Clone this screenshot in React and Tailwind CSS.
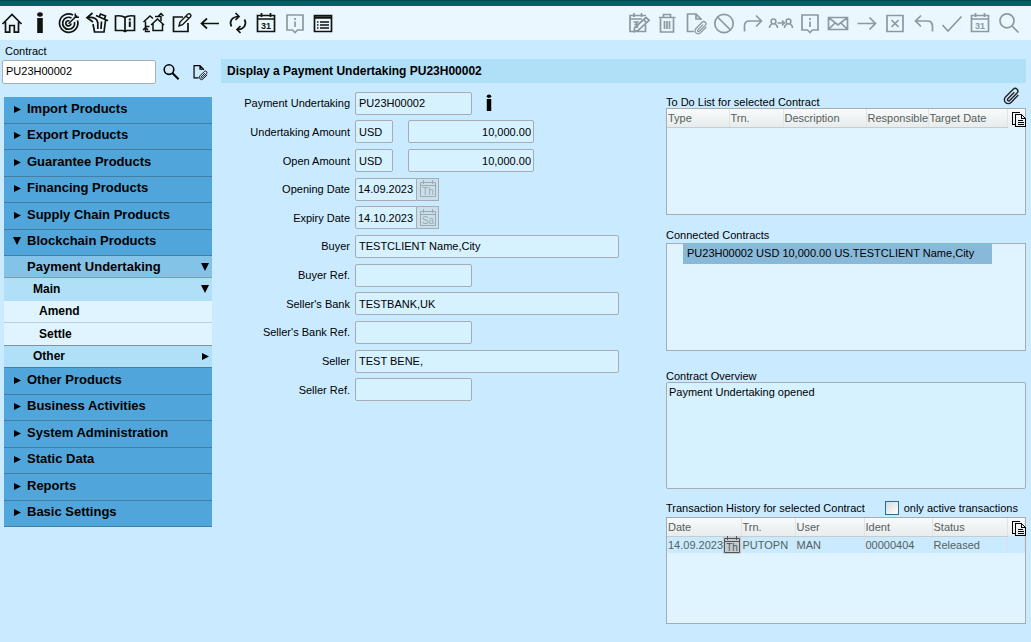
import clsx from "clsx";

function Icon({ children, className = "size-5" }) {
  return (
    <svg
      viewBox="0 0 20 20"
      fill="none"
      stroke="currentColor"
      strokeWidth="1.7"
      className={clsx("block shrink-0 overflow-visible", className)}
      aria-hidden="true"
    >
      {children}
    </svg>
  );
}

const calendarFrame = (
  <>
    <path d="M1.500 2.500h17v16h-17zM1.500 6h17" />
    <path d="M5.500 0v4M14.500 0v4" />
  </>
);

const clip = "M18 9.500 9.500 18.200a4.600 4.600 0 0 1-6.600-6.500L12 2.600a3.200 3.200 0 0 1 4.600 4.500l-8.700 8.800a1.500 1.500 0 0 1-2.200-2.100l7.600-7.700";

const icons = {
  home: (
    <path d="M.5 11 10 1.500l9.500 9.500M3.500 9v10.200h4.200V12.500h4.600v6.700h4.200V9" />
  ),
  info: (
    <g fill="currentColor" stroke="none">
      <ellipse cx="10" cy="1.500" rx="2.800" ry="2.200" />
      <path d="M7.200 5h5.600v15H7.200z" />
    </g>
  ),
  target: (
    <>
      <path d="M14 2A9.200 9.200 0 1 0 18.500 7.500" />
      <path d="M12.500 5A6 6 0 1 0 15.500 9" />
      <path d="M10.500 8A2.600 2.600 0 1 0 12 10.500" />
      <path d="M9.500 10.800 18 2.500M16.300.5v3.700H20" strokeWidth="1.500" />
    </>
  ),
  restore: (
    <>
      <path d="M5.500 0 0 4.800 6 9M.5 4.800c5-1.300 9.500 0 10.300 5V16" />
      <path d="m9 2.500 12 5.200M12.500 3.500l1-2.500 5 2-1 2.800M18.500 7.500 17 19H7.500L6 11M14.500 8.500 14 16" />
    </>
  ),
  book: (
    <>
      <path d="M10 4.500C7.500 2.500 4 2.500.5 3v14.500H8l2 1 2-1h7.500V3c-3.500-.5-7-.5-9.500 1.500zM10 4.500v13" />
      <path d="M14.800 5.500v2M14.800 8.500v5.500" strokeWidth="2" />
    </>
  ),
  homeSwap: (
    <g strokeWidth="1.500">
      <path d="m8 12 6.500-6 6.500 6M10 10.500v7h9.500v-7" />
      <path d="M6.500 13.500h-4v-5M.5 9 7 3l3 2.500M12 3.500h6V8M15.500 3 18 .5 20.500 3" />
      <path d="M7 18.500H2.500V15M0 17l2.500-2.500L5 17" />
    </g>
  ),
  edit: (
    <>
      <path d="M11 4H1.500v14.500H16V10" />
      <path d="m7 13 1-4 8-8c1.500-1 4 1 2.500 2.700l-8 8zM14 3l2.800 2.700" strokeWidth="1.400" />
    </>
  ),
  back: <path d="M19 10.500H1.500M7 5.500l-5.500 5L7 15.500" />,
  refresh: (
    <>
      <path d="M3.500 13.500C1 9 3.500 3.500 11 3.500M7.500 0 11 3.500 7.500 7" />
      <path d="M16.500 6.500c2.500 4.500 0 10-7.500 10M12.500 13 9 16.500l3.500 3.500" />
    </>
  ),
  calendar: (
    <>
      {calendarFrame}
      <text
        x="10"
        y="15.500"
        textAnchor="middle"
        fill="currentColor"
        stroke="none"
        className="font-['Liberation_Sans'] text-[9px] font-bold"
      >
        31
      </text>
    </>
  ),
  note: (
    <>
      <path d="M2 2h16v15h-5.500L10 19.500 7.500 17H2z" />
      <path d="M10 5v2M10 8.500V14" />
    </>
  ),
  list: (
    <>
      <path d="M1.500 2.500h17v16h-17z" />
      <path d="M2 4.500h16" strokeWidth="2.500" />
      <path d="M4 9h1.500M7 9h9M4 12h1.500M7 12h9M4 15h1.500M7 15h9" />
    </>
  ),
  calendarEdit: (
    <>
      <path d="M16.500 11.500v7H1V2.500h16M1 6h12M5 0v4M12.500 0v4" />
      <path d="M4.500 9h4L6.500 11.500c3 0 2.500 3 .5 3" />
      <path d="m5 18.500.8-4L17 4.500l3.200 2.800L9 17.500zM14.500 6.700l3.200 3" />
    </>
  ),
  trash: (
    <path d="M3.500 5.500v13.500h13V5.500M2 4.500h16.500M6.500 4V1.500h7V4M7.500 8v8M10 8v8M12.500 8v8" />
  ),
  attach: (
    <>
      <path d="M8 18.500H1.500V1H10l5 5v1M10 1v5h5" />
      <g transform="translate(8 7.500) scale(.68)">
        <path d={clip} strokeWidth="1.900" />
      </g>
    </>
  ),
  ban: (
    <>
      <circle cx="10" cy="10.500" r="9.200" />
      <path d="m3.500 4 13 13" />
    </>
  ),
  forward: <path d="M1.500 18.500V13c0-4 2-5 5-5h12M13 2.500 18.500 8 13 13.500" />,
  transfer: (
    <g strokeWidth="1.500">
      <circle cx="2.500" cy="8.500" r="2.400" />
      <path d="M-1.500 15c0-2.500 1-3 2.500-4.200M6.500 15c0-2.500-1-3-2.500-4.200" />
      <circle cx="17.500" cy="8.500" r="2.400" />
      <path d="M13.500 15c0-2.500 1-3 2.500-4.200M21.500 15c0-2.500-1-3-2.500-4.200M6.500 10h6.500M11 7.500l2.500 2.500-2.500 2.500" />
    </g>
  ),
  mail: (
    <path d="M.5 4.500h19v12H.5zM.5 4.500 10 12l9.500-7.500M.5 16.500 7 10M19.500 16.500 13 10" />
  ),
  next: <path d="M.5 10.500h18M12.500 4.500l6 6-6 6" />,
  cancel: <path d="M2 2.500h16v16H2zM6.500 7l7 7M13.500 7l-7 7" />,
  undo: <path d="M18.500 18.500V14c0-5-2-6-5-6H1.500M7 2.500 1.500 8 7 13.500" />,
  check: <path d="m.5 12 5.500 6L19.500 3.500" />,
  search: (
    <>
      <circle cx="8" cy="7.800" r="7" />
      <path d="m13 13 6.500 6.500" />
    </>
  ),
  paperclip: <path d={clip} strokeWidth="1.600" />,
  copy: (
    <g shapeRendering="crispEdges" strokeWidth="1">
      <path d="M3.500 12.500h-3V.5h7l1 1" />
      <path d="M3.500 2.500h6l4 4v8h-10zM9.500 2.500v4h4M5.500 8.500h5M5.500 10.500h6M5.500 12.500h6" />
    </g>
  ),
};

const leftTools = [
  ["home", "Home"],
  ["info", "Information"],
  ["target", "Target"],
  ["restore", "Restore"],
  ["book", "Manual"],
  ["homeSwap", "Switch entity"],
  ["edit", "Edit"],
  ["back", "Back"],
  ["refresh", "Refresh"],
  ["calendar", "Calendar"],
  ["note", "Note", true],
  ["list", "List"],
];

const rightTools = [
  ["calendarEdit", "Edit diary"],
  ["trash", "Delete"],
  ["attach", "Attach document"],
  ["ban", "Block"],
  ["forward", "Forward"],
  ["transfer", "Transfer"],
  ["note", "Info"],
  ["mail", "Mail"],
  ["next", "Next"],
  ["cancel", "Cancel"],
  ["undo", "Undo"],
  ["check", "Confirm"],
  ["calendar", "Diary"],
  ["search", "Search"],
];

function ToolButton({ icon, label, disabled }) {
  return (
    <button
      type="button"
      aria-label={label}
      disabled={disabled}
      className={clsx("shrink-0", disabled ? "text-[#8b9a9e]" : "text-[#10130e]")}
    >
      <Icon>{icons[icon]}</Icon>
    </button>
  );
}

function Arrow({ down }) {
  return (
    <svg viewBox="0 0 8 8" className="size-2 shrink-0" fill="#000" aria-hidden="true">
      {down ? <path d="M0 0h8L4 8z" /> : <path d="M1 1v7l7-3.500z" />}
    </svg>
  );
}

function MenuGroup({ items, open }) {
  return (
    <div className="grid h-[159px] grid-rows-6">
      {items.map((item) => (
        <button
          key={item}
          type="button"
          className="flex items-center gap-1.5 border-b border-[#437fa3] bg-[#50a6da] pb-0.5 pl-[9px] text-left text-[13px] font-bold"
        >
          <Arrow down={item === open} />
          {item}
        </button>
      ))}
    </div>
  );
}

const subItems = [
  { label: "Payment Undertaking", className: "bg-[#84c3e8] pl-[23px] text-[13px] border-[#8498a5]", arrow: "down" },
  { label: "Main", className: "bg-[#b0dff8] pl-[29px] text-xs border-[#b0dff8]", arrow: "down" },
  { label: "Amend", className: "bg-[#dff4ff] pl-[35px] text-xs border-[#bcd0da]" },
  { label: "Settle", className: "bg-[#dff4ff] pl-[35px] text-xs border-[#7f929d]" },
  { label: "Other", className: "bg-[#b0dff8] pl-[29px] text-xs border-[#437fa3]", arrow: "right" },
];

function Sidebar() {
  return (
    <aside className="w-[221px] shrink-0">
      <label htmlFor="contract" className="block h-5 pl-[5px] pt-[3px] leading-4">
        Contract
      </label>
      <div className="flex items-center pl-0.5">
        <input
          id="contract"
          defaultValue="PU23H00002"
          className="h-6 w-[154px] rounded-[2px] border border-[#a7aeb2] bg-white px-[3px] pb-0.5"
        />
        <button type="button" aria-label="Find contract" className="ml-[7px]">
          <Icon className="size-4">
            <circle cx="7.500" cy="7" r="6" strokeWidth="2" />
            <path d="m12 11.500 7.500 7.500" strokeWidth="2.500" />
          </Icon>
        </button>
        <button type="button" aria-label="Contract documents" className="ml-[14px]">
          <Icon className="size-[14px]">{icons.attach}</Icon>
        </button>
      </div>
      <nav className="ml-1 mr-[9px] mt-[13px]">
        <MenuGroup
          open="Blockchain Products"
          items={[
            "Import Products",
            "Export Products",
            "Guarantee Products",
            "Financing Products",
            "Supply Chain Products",
            "Blockchain Products",
          ]}
        />
        <div className="grid h-[112px] grid-rows-5">
          {subItems.map((item) => (
            <button
              key={item.label}
              type="button"
              className={clsx(
                "flex items-center justify-between border-b pr-[3px] text-left font-bold",
                item.className
              )}
            >
              {item.label}
              {item.arrow && <Arrow down={item.arrow === "down"} />}
            </button>
          ))}
        </div>
        <MenuGroup
          items={[
            "Other Products",
            "Business Activities",
            "System Administration",
            "Static Data",
            "Reports",
            "Basic Settings",
          ]}
        />
      </nav>
    </aside>
  );
}

function Field({ id, label, children }) {
  return (
    <div className="flex items-center">
      <label htmlFor={id} className="mr-[5px] w-[129px] shrink-0 text-right">
        {label}
      </label>
      {children}
    </div>
  );
}

function TextInput({ className, ...props }) {
  return (
    <input
      readOnly
      className={clsx(
        "h-[23px] rounded-[2px] border border-[#a5adb2] bg-[#d6f1ff]",
        className
      )}
      {...props}
    />
  );
}

function DayIcon({ day, className }) {
  return (
    <svg
      viewBox="0 0 18 18"
      className={clsx("block size-[18px] shrink-0", className)}
      fill="none"
      stroke="currentColor"
      aria-hidden="true"
    >
      <path d="M1.500 2.500h15v14h-15zM1.500 5.500h15M4.500 0v4M13.500 0v4" />
      <text
        x="9"
        y="15"
        textAnchor="middle"
        fill="currentColor"
        stroke="none"
        className="font-['Liberation_Sans'] text-[10px]"
      >
        {day}
      </text>
    </svg>
  );
}

function DateInput({ id, value, day }) {
  return (
    <div className="flex">
      <TextInput id={id} defaultValue={value} className="w-[62px] rounded-r-none pl-0.5" />
      <button
        type="button"
        disabled
        aria-label={`Choose date, ${day}`}
        className="flex h-[23px] w-[22px] items-center justify-center border border-l-0 border-[#a5adb2] bg-[#c9e0ec] text-[#9cabb3]"
      >
        <DayIcon day={day} />
      </button>
    </div>
  );
}

function ContractForm() {
  return (
    <form className="mt-1.5 grid h-[315px] min-w-0 flex-1 grid-rows-11">
      <Field id="undertaking" label="Payment Undertaking">
        <TextInput id="undertaking" defaultValue="PU23H00002" className="w-[117px] px-[3px]" />
        <button type="button" aria-label="Undertaking details" className="ml-[9px] text-black">
          <Icon className="size-4">{icons.info}</Icon>
        </button>
      </Field>
      <Field id="amount" label="Undertaking Amount">
        <TextInput aria-label="Undertaking currency" defaultValue="USD" className="w-[38px] px-[3px]" />
        <TextInput id="amount" defaultValue="10,000.00" className="ml-[15px] w-[126px] px-0.5 text-right" />
      </Field>
      <Field id="open-amount" label="Open Amount">
        <TextInput aria-label="Open currency" defaultValue="USD" className="w-[38px] px-[3px]" />
        <TextInput id="open-amount" defaultValue="10,000.00" className="ml-[15px] w-[126px] px-0.5 text-right" />
      </Field>
      <Field id="opening" label="Opening Date">
        <DateInput id="opening" value="14.09.2023" day="Th" />
      </Field>
      <Field id="expiry" label="Expiry Date">
        <DateInput id="expiry" value="14.10.2023" day="Sa" />
      </Field>
      <Field id="buyer" label="Buyer">
        <TextInput id="buyer" defaultValue="TESTCLIENT Name,City" className="w-[264px] px-[3px]" />
      </Field>
      <Field id="buyer-ref" label="Buyer Ref.">
        <TextInput id="buyer-ref" className="w-[117px] px-[3px]" />
      </Field>
      <Field id="bank" label="Seller's Bank">
        <TextInput id="bank" defaultValue="TESTBANK,UK" className="w-[264px] px-[3px]" />
      </Field>
      <Field id="bank-ref" label="Seller's Bank Ref.">
        <TextInput id="bank-ref" className="w-[117px] px-[3px]" />
      </Field>
      <Field id="seller" label="Seller">
        <TextInput id="seller" defaultValue="TEST BENE," className="w-[264px] px-[3px]" />
      </Field>
      <Field id="seller-ref" label="Seller Ref.">
        <TextInput id="seller-ref" className="w-[117px] px-[3px]" />
      </Field>
    </form>
  );
}

function DataTable({ label, columns, children }) {
  return (
    <div className="h-[107px] border border-[#a5adb2] bg-[#dff4ff]">
      <table aria-label={label} className="w-full table-fixed text-left text-[#56605c]">
        <thead>
          <tr className="h-[18px] bg-linear-to-b from-[#f8fafb] to-[#e8eced]">
            {columns.map(([name, width]) => (
              <th
                key={name}
                className={clsx(
                  "overflow-hidden whitespace-nowrap border-b border-r border-b-[#c3cdd2] border-r-[#dfe4e6] p-0 pl-px font-normal leading-4",
                  width
                )}
              >
                {name}
              </th>
            ))}
            <th className="p-0">
              <button type="button" aria-label="Copy table" className="ml-1 block h-4 pt-0.5 text-black">
                <svg
                  viewBox="0 0 14 15"
                  className="h-[15px] w-[14px]"
                  fill="none"
                  stroke="currentColor"
                  aria-hidden="true"
                >
                  {icons.copy}
                </svg>
              </button>
            </th>
          </tr>
        </thead>
        {children}
      </table>
    </div>
  );
}

function Panels() {
  return (
    <div className="mr-[5px] w-[360px] shrink-0">
      <div className="flex h-[25px] items-end justify-between">
        <h2 className="leading-3">To Do List for selected Contract</h2>
        <button type="button" aria-label="Attachments" className="mb-1 mr-1.5 text-[#222]">
          <Icon className="size-[17px]">{icons.paperclip}</Icon>
        </button>
      </div>
      <DataTable
        label="To Do List for selected Contract"
        columns={[
          ["Type", "w-[62px]"],
          ["Trn.", "w-[54px]"],
          ["Description", "w-[83px]"],
          ["Responsible", "w-[62px]"],
          ["Target Date", "w-[79px]"],
        ]}
      />

      <h2 className="mt-3 leading-4">Connected Contracts</h2>
      <ul className="h-[108px] border border-[#a5adb2] bg-[#dff4ff]">
        <li className="ml-4 h-5 w-[309px] bg-[#89b9d9] pl-1 leading-[19px]">
          PU23H00002 USD 10,000.00 US.TESTCLIENT Name,City
        </li>
      </ul>

      <label htmlFor="overview" className="mt-5 block leading-[11px]">
        Contract Overview
      </label>
      <textarea
        id="overview"
        readOnly
        defaultValue="Payment Undertaking opened"
        className="block h-[107px] w-full resize-none rounded-[2px] border border-[#a5adb2] bg-[#d6f1ff] px-0.5 py-[3px] leading-[13px]"
      />

      <div className="mt-2.5 flex h-[18px] items-center pb-px">
        <h2>Transaction History for selected Contract</h2>
        <input
          id="only-active"
          type="checkbox"
          className="ml-auto mr-[5px] size-[14px] appearance-none border border-[#2d6c92] bg-linear-to-br from-[#d5dadd] to-white"
        />
        <label htmlFor="only-active" className="mr-2">
          only active transactions
        </label>
      </div>
      <DataTable
        label="Transaction History for selected Contract"
        columns={[
          ["Date", "w-[74px]"],
          ["Trn.", "w-[54px]"],
          ["User", "w-[69px]"],
          ["Ident", "w-[68px]"],
          ["Status", "w-[75px]"],
        ]}
      >
        <tbody>
          <tr className="h-[17px] bg-[#caebff] *:border-r *:border-[#d9e2e6] *:p-0 *:pl-px *:leading-4">
            <td className="whitespace-nowrap">
              <span className="flex items-center">
                14.09.2023
                <DayIcon day="Th" className="-my-1 size-4 bg-[#c4ccd1] text-[#4e5558]" />
              </span>
            </td>
            <td>PUTOPN</td>
            <td>MAN</td>
            <td>00000404</td>
            <td>Released</td>
            <td></td>
          </tr>
        </tbody>
      </DataTable>
    </div>
  );
}

export default function App() {
  return (
    <div className="min-h-screen bg-[#caebff] font-['Liberation_Sans',Arial,sans-serif] text-[11px] leading-4 text-black">
      <div className="h-1.5 border-t border-[#004a50] bg-[#005f66]" />
      <header className="flex h-[34px] items-center justify-between bg-[#ebf7ff] pb-px pl-0.5 pr-3">
        <div className="flex w-[331px] justify-between">
          {leftTools.map(([icon, label, disabled]) => (
            <ToolButton key={label} icon={icon} label={label} disabled={disabled} />
          ))}
        </div>
        <div className="flex w-[390px] justify-between">
          {rightTools.map(([icon, label]) => (
            <ToolButton key={label} icon={icon} label={label} disabled />
          ))}
        </div>
      </header>
      <div className="flex">
        <Sidebar />
        <main className="min-w-0 flex-1 pt-[19px]">
          <h1 className="mr-[5px] h-6 bg-[#b0dff8] pl-1.5 text-xs font-bold leading-6">
            Display a Payment Undertaking PU23H00002
          </h1>
          <div className="flex">
            <ContractForm />
            <Panels />
          </div>
        </main>
      </div>
    </div>
  );
}
